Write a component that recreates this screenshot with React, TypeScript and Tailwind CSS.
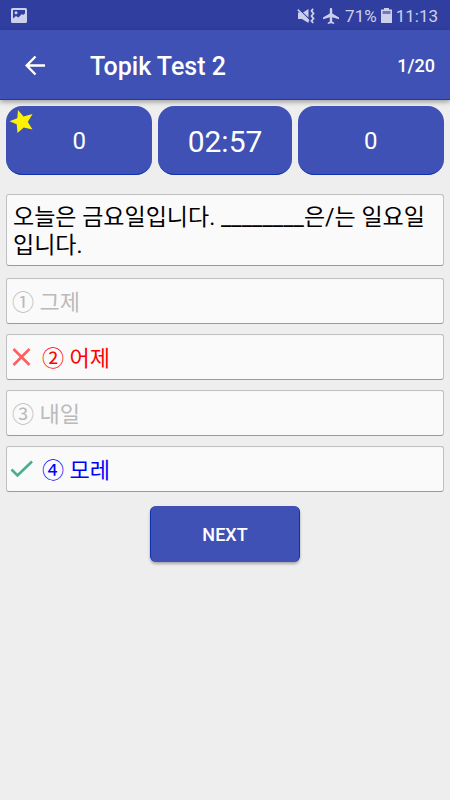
import React from 'react';
import clsx from 'clsx';

type OptionState = 'idle' | 'wrong' | 'correct';

interface Option {
  id: number;
  label: string;
  state: OptionState;
}

const options: Option[] = [
  { id: 1, label: '① 그제', state: 'idle' },
  { id: 2, label: '② 어제', state: 'wrong' },
  { id: 3, label: '③ 내일', state: 'idle' },
  { id: 4, label: '④ 모레', state: 'correct' },
];

const card = 'rounded-[3px] border border-[#c0c0c0] border-b-[#999999] bg-[#fafafa]';
const scoreBox = 'relative flex items-center justify-center rounded-2xl bg-[#3f51b5] border-b border-[#0d31b0] pt-[2px]';

function StatusBar() {
  return (
    <div className="flex h-[30px] items-center justify-between bg-[#303f9f] pl-[11px] pr-3 pt-[2px] text-[#cdd0ea]">
      <svg className="h-4 w-4" viewBox="0 0 16 16">
        <path
          d="M1.500 0h13A1.500 1.500 0 0 1 16 1.500v12a1.500 1.500 0 0 1-1.500 1.500h-13A1.500 1.500 0 0 1 0 13.500v-12A1.500 1.500 0 0 1 1.500 0zM2 2v8.500L5 8l2.300 1.500L11 6l1 1 2-1.500V2z"
          fill="currentColor"
          fillRule="evenodd"
        />
        <circle cx="5" cy="4.700" r="1.500" fill="currentColor" />
      </svg>
      <div className="flex items-center">
        {/* Muted + vibrate */}
        <svg className="mr-2 h-4 w-[18px]" viewBox="0 0 18 16" fill="currentColor">
          <path d="M1 4.500h3.500l7 6.500v4L5 11H1z" />
          <path d="M6 4.600 11.500 1v8.500z" />
          <path d="M.8 1.600 12 13" fill="none" stroke="currentColor" strokeWidth="1.500" />
          <path d="M16 .8 14.500 3l2 2.500-2 2.500 2 2.500-2 2.500 1.700 2" fill="none" stroke="currentColor" strokeWidth="1.800" />
        </svg>
        <svg className="mr-[6px] h-4 w-4" viewBox="2 2 20 20" fill="currentColor">
          <path d="M22 16v-2l-8.500-5V3.500C13.500 2.670 12.830 2 12 2s-1.500.670-1.500 1.500V9L2 14v2l8.500-2.500V19L8 20.500V22l4-1 4 1v-1.500L13.500 19v-5.500L22 16z" />
        </svg>
        <span className="text-[17px] leading-7">71%</span>
        <svg className="mx-[4px] h-4 w-[11px]" viewBox="0 0 11 16" fill="currentColor">
          <path d="M3 0h5v1.500h3V15H0V1.500h3z" />
          <path d="M1.500 3h8v3h-8z" fill="#7079bd" />
        </svg>
        <span className="text-[17px] leading-7">11:13</span>
      </div>
    </div>
  );
}

function ResultIcon({ state }: { state: OptionState }) {
  if (state === 'wrong') {
    return (
      <svg className="mr-2 h-6 w-6" viewBox="0 0 24 24" fill="none" stroke="#ff5f5f" strokeWidth="2.600">
        <path d="M3.500 4l16 16M19.500 4L3.500 20" />
      </svg>
    );
  }
  if (state === 'correct') {
    return (
      <svg className="mr-2 h-6 w-6" viewBox="0 0 24 24" fill="none" stroke="#45b08c" strokeWidth="2.600">
        <path d="M1.500 12.500l6 6L22 4.500" />
      </svg>
    );
  }
  return null;
}

export default function App() {
  return (
    <div className="min-h-screen bg-[#eeeeee] font-['Roboto','Noto_Sans_CJK_KR',sans-serif]">
      <StatusBar />

      {/* Toolbar */}
      <header className="relative flex h-[70px] items-center border-b border-[#2338a6] bg-[#3f51b5] pl-6 pr-[15px] pt-[2px] text-white shadow-[0_2px_5px_rgba(0,0,0,0.35)]">
        <button type="button" aria-label="Back" className="mr-[42px]">
          <svg className="h-6 w-6" viewBox="0 0 24 24" fill="none" stroke="currentColor" strokeWidth="2.400">
            <path d="M21 11.500H3M11.500 2.500L2.700 11.500l8.800 9" />
          </svg>
        </button>
        <h1 className="flex-1 pt-[2px] text-[25px] font-medium leading-8">Topik Test 2</h1>
        <span className="text-lg font-medium">1/20</span>
      </header>

      <main className="px-[6px] pt-[6px]">
        {/* Scores and timer */}
        <div className="grid h-[69px] grid-cols-[11fr_10fr_11fr] gap-[6px] text-white">
          <div className={scoreBox}>
            <svg className="absolute left-[3px] top-[3px] h-6 w-6" viewBox="0 0 24 24" fill="#fff200">
              <path d="M9 1l5.500 6.500L23.500 5l-4.700 8 4.700 7.500-8.800-1.900L8.500 24l-.8-8.800L.5 12.300l7.800-3z" />
            </svg>
            <span className="text-2xl">0</span>
          </div>
          <div className={scoreBox}>
            <span className="text-[30px]">02:57</span>
          </div>
          <div className={scoreBox}>
            <span className="text-2xl">0</span>
          </div>
        </div>

        {/* Question */}
        <p className={clsx(card, 'mt-[19px] break-all px-[6px] pt-[9px] pb-[5px] text-[23px] leading-7 text-black')}>
          오늘은 금요일입니다. ________은/는 일요일입니다.
        </p>

        {/* Options */}
        <div className="mt-3 flex flex-col gap-[10px]">
          {options.map((option) => (
            <button
              key={option.id}
              type="button"
              className={clsx(
                card,
                'flex h-[46px] items-center text-left text-[22px]',
                option.state === 'idle' && 'px-[5px] text-[#bababa]',
                option.state === 'wrong' && 'px-[3px] text-[#ff0000]',
                option.state === 'correct' && 'px-[3px] text-[#0000ff]'
              )}
            >
              <ResultIcon state={option.state} />
              <span className="pt-[2px]">{option.label}</span>
            </button>
          ))}
        </div>

        <div className="mt-[14px] flex justify-center">
          <button
            type="button"
            className="h-14 w-[150px] rounded-md border-x border-[#0d31b0] bg-[#3f51b5] pt-[2px] text-lg font-medium text-white shadow-[0_2px_3px_rgba(0,0,0,0.3)]"
          >
            NEXT
          </button>
        </div>
      </main>
    </div>
  );
}
